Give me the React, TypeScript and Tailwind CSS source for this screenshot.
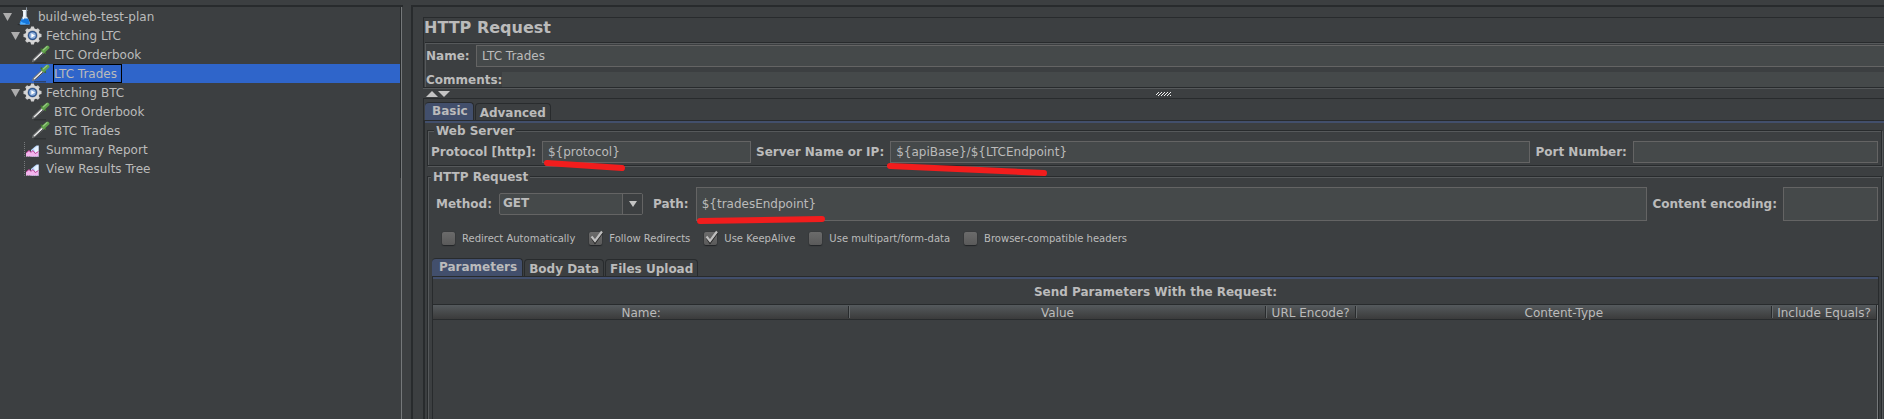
import { useState, type ReactNode } from "react";

type NodeKind = "plan" | "group" | "sampler" | "report";

interface TreeNode {
  label: string;
  kind: NodeKind;
  depth: 0 | 1 | 2;
  open?: boolean;
}

const nodes: TreeNode[] = [
  { label: "build-web-test-plan", kind: "plan", depth: 0, open: true },
  { label: "Fetching LTC", kind: "group", depth: 1, open: true },
  { label: "LTC Orderbook", kind: "sampler", depth: 2 },
  { label: "LTC Trades", kind: "sampler", depth: 2 },
  { label: "Fetching BTC", kind: "group", depth: 1, open: true },
  { label: "BTC Orderbook", kind: "sampler", depth: 2 },
  { label: "BTC Trades", kind: "sampler", depth: 2 },
  { label: "Summary Report", kind: "report", depth: 1 },
  { label: "View Results Tree", kind: "report", depth: 1 },
];

const indent = { 0: "pl-[3px]", 1: "pl-[11px]", 2: "pl-[19px]" };

function PlanIcon() {
  return (
    <svg width="20" height="19" viewBox="0 0 20 19" aria-hidden="true">
      <ellipse cx="9" cy="17.500" rx="6.500" ry="1" fill="#25282a" opacity=".7" />
      <path d="M8 3.500h3.800v5.500l3.100 7q.4 1.600-1.100 1.600H5.900q-1.500 0-1.100-1.600L8 9z" fill="#dce8f3" />
      <path d="M6.700 11.500h6.500l1.700 4.500q.4 1.600-1.100 1.600H5.900q-1.500 0-1.100-1.600z" fill="#1577dd" />
      <path d="M6.200 14.500q2 1.800 4.500 1.500l-.5 1.300H6q-1 0-.8-1z" fill="#4fb0ff" />
      <path d="M7.300 3.500h5" stroke="#f5f8fa" strokeWidth="1.100" />
      <path d="M11.500.300v9.500" stroke="#8d98a3" strokeWidth="1" />
      <path d="M9.300 4.500v5l-1.300 3" stroke="#fff" strokeWidth="1" fill="none" />
    </svg>
  );
}

function GearIcon() {
  const teeth = [0, 45, 90, 135, 180, 225, 270, 315];
  return (
    <svg width="20" height="19" viewBox="0 0 20 19" aria-hidden="true">
      {teeth.map((a) => (
        <path key={a} d="M7.300 3.500L8.100.5h2.800l.8 3z" fill="#cfcfcf" transform={`rotate(${a} 9.500 9.500)`} />
      ))}
      <circle cx="9.500" cy="9.500" r="7.200" fill="#d9d9d9" />
      <circle cx="9.500" cy="9.500" r="5" fill="#8d9199" />
      <circle cx="9.500" cy="9.500" r="4.500" fill="#27518f" />
      <circle cx="9.500" cy="9.500" r="3.300" fill="#8fb0dc" />
      <path d="M8.300 7.300v4.400l3.700-2.200z" fill="#fff" />
    </svg>
  );
}

function SamplerIcon() {
  return (
    <svg width="20" height="19" viewBox="0 0 20 19" aria-hidden="true">
      <path d="M3 17.800h12" stroke="#292b2d" strokeWidth="1.200" opacity=".7" />
      <path d="M.8 17.200l1-3.200 9-8.500 2.500 2.500L4.200 16z" fill="#77797a" />
      <path d="M2.600 14.800l8.400-8 1.300 1.300-8.200 7.500z" fill="#f2f2f2" />
      <path d="M4 15.600l8.600-8" stroke="#303234" strokeWidth=".8" />
      <path d="M10.300 4.200l4 4" stroke="#41702f" strokeWidth="1.800" strokeLinecap="round" />
      <path d="M12.500 6l4-3.600" stroke="#62a34c" strokeWidth="3.800" strokeLinecap="round" />
      <path d="M12.400 4.800l3.600-3.100" stroke="#9fce8b" strokeWidth="1.100" strokeLinecap="round" />
    </svg>
  );
}

function ReportIcon() {
  return (
    <svg width="20" height="19" viewBox="0 0 20 19" aria-hidden="true">
      <path d="M1.500 2v14.500H17" stroke="#777a7c" strokeWidth="1" strokeDasharray="1 1" fill="none" />
      <path d="M8 16.500V10l3.500-3 2-1.500h2V16.500z" fill="#b9d8ff" />
      <path d="M11 8.500l4.500-3v7l-3 1.500z" fill="#e9f3ff" />
      <path d="M3 16.500V13l3-2.500 2 1.800 2-1.800 2.200 3 3.300-2v5z" fill="#f3b5ee" />
      <path d="M3 13l3-2.500 2 1.800 2-1.800 2.200 3 3.300-2" stroke="#b8358d" strokeWidth=".9" fill="none" />
    </svg>
  );
}

function NodeIcon({ kind }: { kind: NodeKind }) {
  if (kind === "plan") return <PlanIcon />;
  if (kind === "group") return <GearIcon />;
  if (kind === "sampler") return <SamplerIcon />;
  return <ReportIcon />;
}

function TestTree() {
  const [selected, setSelected] = useState("LTC Trades");
  return (
    <nav aria-label="Test plan" className="mt-[5px] w-[403px] shrink-0 border-t-2 border-[#282b2d]">
      <ul className="mr-px min-h-full border-r border-[#75787a]">
        {nodes.map((n) => {
          const active = n.label === selected;
          return (
            <li key={n.label} className="border-r border-[#282b2d]">
              <button
                type="button"
                onClick={() => setSelected(n.label)}
                className={`flex h-[19px] w-full items-center text-left ${indent[n.depth]} ${active ? "bg-[#2f65ca]" : ""}`}
              >
                <span className="w-3 shrink-0">
                  {n.open && (
                    <svg width="9" height="8" viewBox="0 0 9 8" aria-hidden="true">
                      <path d="M0 0h9L4.500 8z" fill="#adadad" />
                    </svg>
                  )}
                </span>
                <span className="mr-0.5 w-5 shrink-0">
                  <NodeIcon kind={n.kind} />
                </span>
                <span className={`h-[19px] border pr-1 leading-[19px] ${active ? "border-black" : "border-transparent"}`}>
                  {n.label}
                </span>
              </button>
            </li>
          );
        })}
      </ul>
    </nav>
  );
}

const field = "block w-full min-w-0 border border-[#646464] bg-[#45494a] px-[5px] text-[#bbbbbb] outline-none";

function Marked({ className, stroke, children }: { className: string; stroke?: ReactNode; children: ReactNode }) {
  return (
    <div className={`relative min-w-0 ${className}`}>
      {children}
      {stroke}
    </div>
  );
}

function Marker({ d, className }: { d: string; className: string }) {
  return (
    <svg className={`pointer-events-none absolute z-10 overflow-visible ${className}`} width="160" height="14" aria-hidden="true">
      <path d={d} stroke="#f21d1d" strokeWidth="6" strokeLinecap="round" fill="none" />
    </svg>
  );
}

function Tabs({ names, label }: { names: string[]; label: string }) {
  const [current, setCurrent] = useState(names[0]);
  return (
    <div role="tablist" aria-label={label} className="flex h-[18px] items-end gap-px">
      {names.map((name) => (
        <button
          key={name}
          type="button"
          role="tab"
          aria-selected={name === current}
          onClick={() => setCurrent(name)}
          className={
            name === current
              ? "h-[18px] rounded-t border-t border-r border-[#282b2d] bg-[#424f6c] pr-[5px] pl-[7px] leading-[15px] font-bold"
              : "h-[17px] rounded-t border border-b-0 border-[#282b2d] px-1 leading-[18px] font-bold"
          }
        >
          {name}
        </button>
      ))}
    </div>
  );
}

function Group({ title, children, className = "" }: { title: string; children: ReactNode; className?: string }) {
  return (
    <fieldset
      className={`mr-0.5 ml-[3px] min-w-0 border border-[#282b2d] shadow-[1px_1px_0_#56595b,inset_1px_1px_0_#56595b] ${className}`}
    >
      <legend className="ml-[3px] h-[15px] bg-[#3c3f41] px-0.5 leading-[17px] font-bold">{title}</legend>
      {children}
    </fieldset>
  );
}

function Check({ label, checked }: { label: string; checked?: boolean }) {
  return (
    <label className="flex items-center gap-[7px] text-[10px]">
      <span className="relative block size-[13px]">
        <input
          type="checkbox"
          defaultChecked={checked}
          className="peer block size-[13px] appearance-none rounded-xs bg-linear-to-b from-[#6b6b6b] to-[#5a5a5a] shadow-[0_1px_1px_#222527,0_0_1px_#222527]"
        />
        <svg
          className="pointer-events-none absolute -top-0.5 left-0 hidden overflow-visible peer-checked:block"
          width="14"
          height="14"
          viewBox="0 0 14 14"
          aria-hidden="true"
        >
          <path d="M3 8l3 4.500L13.500 2" stroke="#262626" strokeWidth="2.200" fill="none" />
          <path d="M2.500 6.500L6 11l7-9.500" stroke="#bfbfbf" strokeWidth="2.200" fill="none" />
        </svg>
      </span>
      {label}
    </label>
  );
}

const columns = [
  { name: "Name:", width: "" },
  { name: "Value", width: "" },
  { name: "URL Encode?", width: "w-[90px]" },
  { name: "Content-Type", width: "" },
  { name: "Include Equals?", width: "w-[104px]" },
];

export default function App() {
  return (
    <div className="flex min-h-screen bg-[#3c3f41] font-['DejaVu_Sans',sans-serif] text-[12px] text-[#bbbbbb]">
      <TestTree />
      <main className="mt-[5px] ml-2 flex min-w-0 flex-1 flex-col border-t-2 border-l-2 border-[#282b2d] pt-2.5 pl-2.5">
        <section className="border-t border-b border-l border-[#282b2d] shadow-[0_1px_0_#56595b]">
          <h1 className="text-[16px] leading-[20px] font-bold">HTTP Request</h1>
          <div className="mt-1 ml-px border-t border-[#282b2d]">
            <div className="border-t border-l border-[#56595b] pt-px">
              <div className="flex items-center">
                <label htmlFor="name" className="w-[50px] shrink-0 font-bold">
                  Name:
                </label>
                <input id="name" defaultValue="LTC Trades" className={`${field} h-[22px] border-r-0`} />
              </div>
              <div className="mt-[5px] flex h-[15px] items-center">
                <label htmlFor="comments" className="shrink-0 font-bold">
                  Comments:
                </label>
                <input id="comments" className="block h-[15px] w-full min-w-0 bg-[#45494a] px-1 outline-none" />
              </div>
            </div>
          </div>
        </section>

        <div className="mt-px flex h-[9px] items-center pl-[3px]">
          <button type="button" aria-label="Collapse header" className="block">
            <svg className="block" width="12" height="6" viewBox="0 0 12 6" aria-hidden="true">
              <path d="M0 6h12L6 0z" fill="#c4c4c4" />
            </svg>
          </button>
          <button type="button" aria-label="Expand header" className="block">
            <svg className="block" width="12" height="6" viewBox="0 0 12 6" aria-hidden="true">
              <path d="M0 0h12L6 6z" fill="#c4c4c4" />
            </svg>
          </button>
          <div className="flex flex-1 justify-center pt-px pr-2">
            <svg width="15" height="4" viewBox="0 0 15 4" shapeRendering="crispEdges" aria-hidden="true">
              <path
                d="M2 .500h13M1 1.500h14M0 2.500h15M2 3.500h13"
                stroke="#f0f0f0"
                strokeWidth="1"
                strokeDasharray="1 2"
              />
            </svg>
          </div>
        </div>

        <section className="flex flex-1 flex-col border-t border-l border-[#282b2d] pt-[3px]">
          <div className="pl-px">
            <Tabs names={["Basic", "Advanced"]} label="Request settings" />
          </div>
          <div className="flex flex-1 flex-col border-t border-l border-[#282b2d]">
            <div className="h-0.5 shrink-0 bg-[#424f6c]" />
            <div className="-ml-px flex flex-1 flex-col">
              <Group title="Web Server" className="pt-[3px] pr-[3px] pb-0.5 pl-[3px]">
                <div className="flex items-center">
                  <label htmlFor="protocol" className="shrink-0 font-bold">
                    Protocol [http]:
                  </label>
                  <Marked
                    className="mr-[5px] ml-1.5 flex-[209_1_0px]"
                    stroke={<Marker className="top-[18px] left-0" d="M5 4L80 9" />}
                  >
                    <input id="protocol" defaultValue="${protocol}" className={`${field} h-[22px]`} />
                  </Marked>
                  <label htmlFor="server" className="shrink-0 font-bold">
                    Server Name or IP:
                  </label>
                  <Marked
                    className="mr-[5px] ml-1.5 flex-[640_1_0px]"
                    stroke={<Marker className="top-[18px] left-0" d="M0 7L154 14" />}
                  >
                    <input id="server" defaultValue="${apiBase}/${LTCEndpoint}" className={`${field} h-[22px]`} />
                  </Marked>
                  <label htmlFor="port" className="shrink-0 font-bold">
                    Port Number:
                  </label>
                  <Marked className="ml-1.5 flex-[245_1_0px]">
                    <input id="port" className={`${field} h-[22px]`} />
                  </Marked>
                </div>
              </Group>

              <Group title="HTTP Request" className="mt-[3px] flex flex-1 flex-col border-b-0 pt-[3px] pr-[3px]">
                <div className="flex items-center pl-2">
                  <label htmlFor="method" className="shrink-0 font-bold">
                    Method:
                  </label>
                  <div className="relative mr-2.5 ml-[7px] w-36 shrink-0">
                    <select
                      id="method"
                      defaultValue="GET"
                      className="block h-[22px] w-full appearance-none rounded-xs border border-[#646464] bg-[#45494a] pb-0.5 pl-[3px] font-bold text-[#bbbbbb] outline-none"
                    >
                      <option>GET</option>
                      <option>POST</option>
                      <option>PUT</option>
                      <option>DELETE</option>
                    </select>
                    <span className="pointer-events-none absolute inset-y-px right-px flex w-5 items-center justify-center border-l border-[#646464] bg-[#3c3f41]">
                      <svg width="8" height="6" viewBox="0 0 8 6" aria-hidden="true">
                        <path d="M0 0h8L4 6z" fill="#c4c4c4" />
                      </svg>
                    </span>
                  </div>
                  <label htmlFor="path" className="shrink-0 font-bold">
                    Path:
                  </label>
                  <Marked
                    className="mr-[5px] ml-[7px] flex-1"
                    stroke={<Marker className="top-[28px] left-0" d="M4 6L126 4" />}
                  >
                    <input id="path" defaultValue="${tradesEndpoint}" className={`${field} h-[34px]`} />
                  </Marked>
                  <label htmlFor="encoding" className="shrink-0 font-bold">
                    Content encoding:
                  </label>
                  <Marked className="ml-1.5 w-[95px] shrink-0">
                    <input id="encoding" className={`${field} h-[34px]`} />
                  </Marked>
                </div>

                <div className="mb-0.5 flex h-[35px] items-center gap-3.5 pl-3.5">
                  <Check label="Redirect Automatically" />
                  <Check label="Follow Redirects" checked />
                  <Check label="Use KeepAlive" checked />
                  <Check label="Use multipart/form-data" />
                  <Check label="Browser-compatible headers" />
                </div>

                <div className="flex flex-1 flex-col pl-1">
                  <Tabs names={["Parameters", "Body Data", "Files Upload"]} label="Request content" />
                  <div className="-mr-px flex flex-1 flex-col border-x border-t border-[#282b2d]">
                    <div className="h-0.5 shrink-0 bg-[#424f6c]" />
                    <h2 className="h-[25px] text-center leading-[26px] font-bold">Send Parameters With the Request:</h2>
                    <div className="flex-1 border-t border-[#282b2d]">
                      <div className="h-full border-r border-[#75787a]">
                        <table className="w-full table-fixed border-separate border-spacing-0 border-r border-[#282b2d]">
                          <thead>
                            <tr className="bg-linear-to-b from-[#555a5d] to-[#393939]">
                              {columns.map((c) => (
                                <th
                                  key={c.name}
                                  scope="col"
                                  className={`group h-[15px] border-b border-[#282b2d] p-0 text-center font-normal whitespace-nowrap ${c.width}`}
                                >
                                  <div className="h-3 border-r border-l border-r-[#282b2d] border-l-[#64686a] leading-[14px] group-first:border-l-transparent group-last:border-r-transparent">
                                    {c.name}
                                  </div>
                                </th>
                              ))}
                            </tr>
                          </thead>
                          <tbody />
                        </table>
                      </div>
                    </div>
                  </div>
                </div>
              </Group>
            </div>
          </div>
        </section>
      </main>
    </div>
  );
}
